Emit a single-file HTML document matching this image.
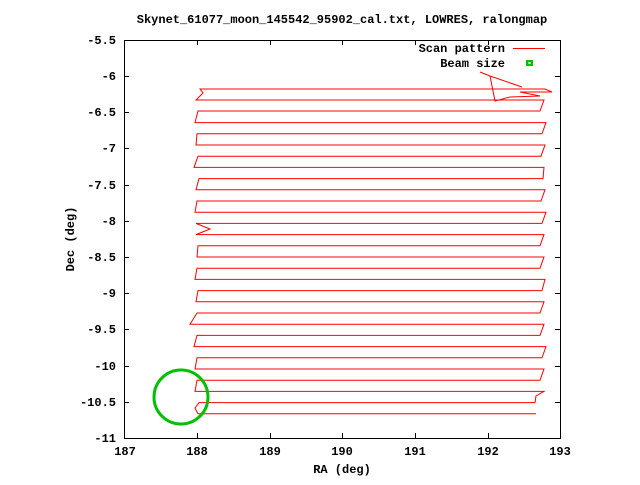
<!DOCTYPE html>
<html><head><meta charset="utf-8"><style>
html,body{margin:0;padding:0;background:#fff;}
svg text{font-family:"Liberation Mono","DejaVu Sans Mono",monospace;font-size:12px;font-weight:bold;fill:#000;}
</style></head><body>
<svg width="640" height="480" viewBox="0 0 640 480" xmlns="http://www.w3.org/2000/svg">
<rect width="640" height="480" fill="#fff"/>
<text x="342" y="23" text-anchor="middle">Skynet_61077_moon_145542_95902_cal.txt, LOWRES, ralongmap</text>
<g stroke="#000" stroke-width="1" fill="none" shape-rendering="crispEdges">
<rect x="124.5" y="40.5" width="436" height="398"/>
<path d="M124,76.5h5M124,112.5h5M124,148.5h5M124,185.5h5M124,221.5h5M124,257.5h5M124,293.5h5M124,329.5h5M124,366.5h5M124,402.5h5
M560,76.5h-5M560,112.5h-5M560,148.5h-5M560,185.5h-5M560,221.5h-5M560,257.5h-5M560,293.5h-5M560,329.5h-5M560,366.5h-5M560,402.5h-5
M197.5,438v-5M270.5,438v-5M342.5,438v-5M415.5,438v-5M488.5,438v-5
M197.5,40v5M270.5,40v5M342.5,40v5M415.5,40v5M488.5,40v5"/>
</g>
<g text-anchor="end">
<text x="116" y="44">-5.5</text>
<text x="116" y="80">-6</text>
<text x="116" y="116">-6.5</text>
<text x="116" y="152">-7</text>
<text x="116" y="189">-7.5</text>
<text x="116" y="225">-8</text>
<text x="116" y="261">-8.5</text>
<text x="116" y="297">-9</text>
<text x="116" y="333">-9.5</text>
<text x="116" y="370">-10</text>
<text x="116" y="406">-10.5</text>
<text x="116" y="442">-11</text>
</g>
<g text-anchor="middle">
<text x="125" y="455">187</text>
<text x="197" y="455">188</text>
<text x="270" y="455">189</text>
<text x="342" y="455">190</text>
<text x="415" y="455">191</text>
<text x="488" y="455">192</text>
<text x="560" y="455">193</text>
<text x="342" y="473">RA (deg)</text>
<text transform="translate(74,239) rotate(-90)">Dec (deg)</text>
</g>
<text x="505" y="52" text-anchor="end">Scan pattern</text>
<text x="505" y="67" text-anchor="end">Beam size</text>
<line x1="513" y1="48.5" x2="545" y2="48.5" stroke="#f00" stroke-width="1"/>
<rect x="526" y="60" width="7" height="6" fill="#00c000"/>
<rect x="528.5" y="62" width="2" height="2" fill="#fff"/>
<path fill="none" stroke="#f00" stroke-width="1" d="M480,72 L490,76 L522,87 L490,76 L495,101 L510,97 L540,96 L520,92 L552,92 L545,89 H200 L203,93 L196,100 H544 L540,111 H198 L195,122.6 H546 L542,133.8 H197 L196,145 H545 L541,156.2 H198 L194,167.4 H544 L543,178.6 H199 L196,189.8 H545 L541,201 H197 L195,212.2 H546 L542,223.4 H196 L210,229 L196,234.6 H544 L540,245.8 H198 L197,257 H544 L540,268.2 H197 L195,279.4 H545 L542,290.6 H198 L196,301.8 H544 L540,313 H197 L190,324.2 H544 L540,335.4 H197 L194,346.6 H546 L542,357.8 H197 L195,369 H544 L540,380.2 H197 L195,391.4 H544 L536,396 L535,402.6 H199 L195,408 L198,413.8 H536"/>
<circle cx="181" cy="397" r="27" fill="none" stroke="#00c000" stroke-width="3"/>
</svg>
</body></html>
